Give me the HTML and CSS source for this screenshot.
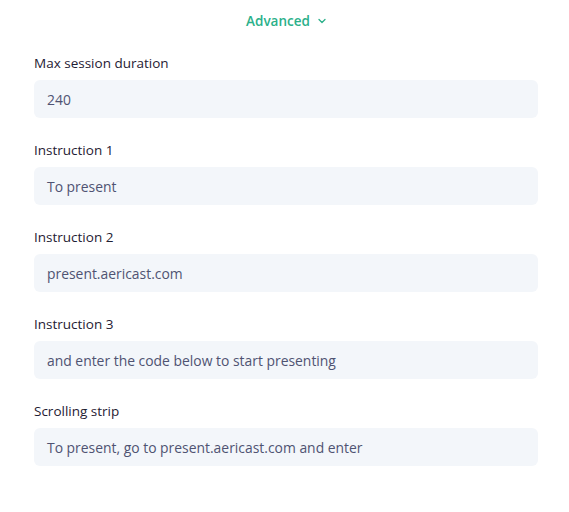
FILE: index.html
```html
<!DOCTYPE html>
<html>
<head>
<meta charset="utf-8">
<link rel="stylesheet" href="styles.css">
</head>
<body>
<div class="panel">
  <div class="toggle">
    <span class="toggle-text">Advanced</span>
    <svg class="chev" width="8" height="6" viewBox="0 0 8 6"><path d="M1 1.5 L4 4.5 L7 1.5" fill="none" stroke="#2bb08a" stroke-width="1.3" stroke-linecap="round" stroke-linejoin="round"/></svg>
  </div>
  <div class="field">
    <label class="label">Max session duration</label>
    <div class="input">240</div>
  </div>
  <div class="field">
    <label class="label">Instruction 1</label>
    <div class="input">To present</div>
  </div>
  <div class="field">
    <label class="label">Instruction 2</label>
    <div class="input">present.aericast.com</div>
  </div>
  <div class="field">
    <label class="label">Instruction 3</label>
    <div class="input">and enter the code below to start presenting</div>
  </div>
  <div class="field">
    <label class="label">Scrolling strip</label>
    <div class="input">To present, go to present.aericast.com and enter</div>
  </div>
</div>
</body>
</html>
```
FILE: styles.css
```css
html, body {
  margin: 0;
  padding: 0;
  background: #ffffff;
}
body {
  font-family: "Open Sans", "DejaVu Sans", sans-serif;
  font-size: 13px;
}
.panel {
  padding: 12px 31px 0 34px;
  display: flex;
  flex-direction: column;
}
.toggle {
  display: flex;
  align-items: center;
  justify-content: center;
  gap: 8px;
  height: 18px;
  color: #2bb08a;
  font-weight: 600;
  font-size: 13.5px;
  margin-bottom: 24px;
}
.field {
  display: flex;
  flex-direction: column;
  gap: 8px;
  margin-bottom: 23px;
}
.label {
  color: #1f2033;
  font-size: 13.5px;
  font-weight: 500;
  line-height: 18px;
}
.input {
  background: #f3f6fa;
  border-radius: 6px;
  height: 38px;
  box-sizing: border-box;
  padding: 0 13px;
  display: flex;
  align-items: center;
  color: #4f5372;
  font-size: 13.9px;
}
```
